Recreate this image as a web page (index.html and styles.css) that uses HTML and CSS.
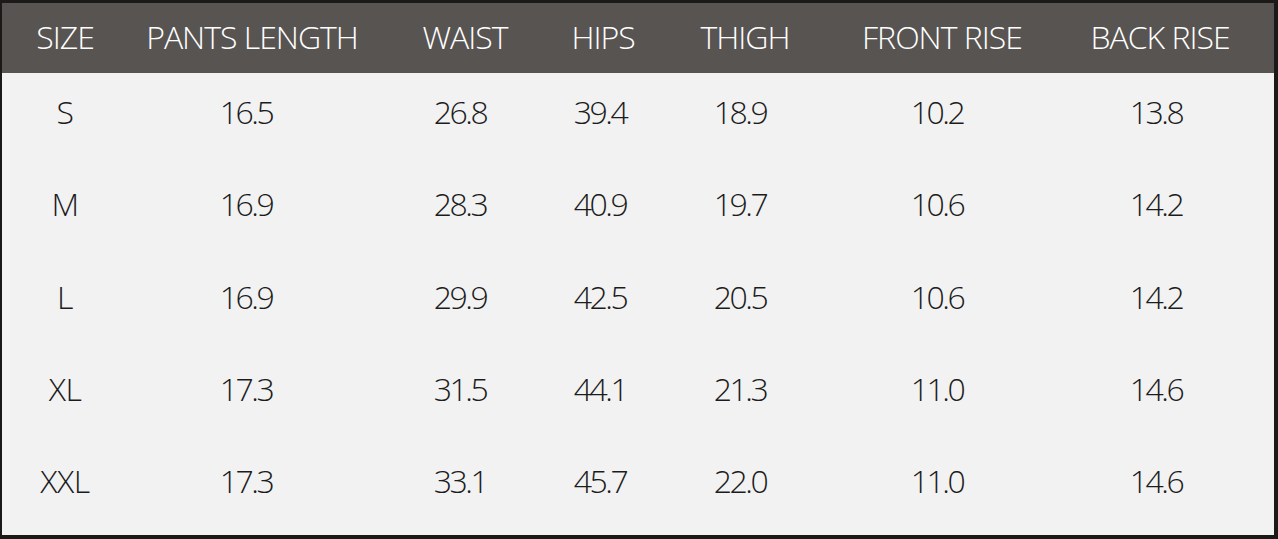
FILE: index.html
```html
<!DOCTYPE html>
<html>
<head>
<meta charset="utf-8">
<link rel="stylesheet" href="styles.css">
</head>
<body>
<div class="frame">
  <div class="table">
    <div class="row head">
      <div>SIZE</div><div>PANTS LENGTH</div><div>WAIST</div><div>HIPS</div><div>THIGH</div><div>FRONT RISE</div><div>BACK RISE</div>
    </div>
    <div class="row body">
      <div class="size">S</div><div>16.5</div><div>26.8</div><div>39.4</div><div>18.9</div><div>10.2</div><div>13.8</div>
    </div>
    <div class="row body">
      <div class="size">M</div><div>16.9</div><div>28.3</div><div>40.9</div><div>19.7</div><div>10.6</div><div>14.2</div>
    </div>
    <div class="row body">
      <div class="size">L</div><div>16.9</div><div>29.9</div><div>42.5</div><div>20.5</div><div>10.6</div><div>14.2</div>
    </div>
    <div class="row body">
      <div class="size">XL</div><div>17.3</div><div>31.5</div><div>44.1</div><div>21.3</div><div>11.0</div><div>14.6</div>
    </div>
    <div class="row body">
      <div class="size">XXL</div><div>17.3</div><div>33.1</div><div>45.7</div><div>22.0</div><div>11.0</div><div>14.6</div>
    </div>
  </div>
</div>
</body>
</html>
```
FILE: styles.css
```css
html, body {
  margin: 0;
  padding: 0;
  background: #1c1a19;
}
.frame {
  width: 1278px;
  height: 539px;
  box-sizing: border-box;
  padding: 3px 4px 4px 2px;
  background: #1c1a19;
}
.table {
  height: 100%;
  display: flex;
  flex-direction: column;
  background: #f2f2f2;
  font-family: "Open Sans", "Liberation Sans", sans-serif;
  font-weight: 300;
}
.row {
  display: grid;
  align-items: center;
  justify-items: center;
}
.head {
  height: 70px;
  grid-template-columns: 126px 248px 178px 98px 186px 208px 228px;
  background: #585452;
  color: #ffffff;
  font-size: 32px;
  letter-spacing: -1px;
  padding-bottom: 4px;
  box-sizing: border-box;
}
.body {
  flex: 1;
  grid-template-columns: 126px 236px 192px 88px 192px 202px 236px;
  color: #1c1c1c;
  font-size: 32px;
  letter-spacing: -2.5px;
  padding-bottom: 16px;
  box-sizing: border-box;
}
.body .size {
  letter-spacing: -0.5px;
}
```
